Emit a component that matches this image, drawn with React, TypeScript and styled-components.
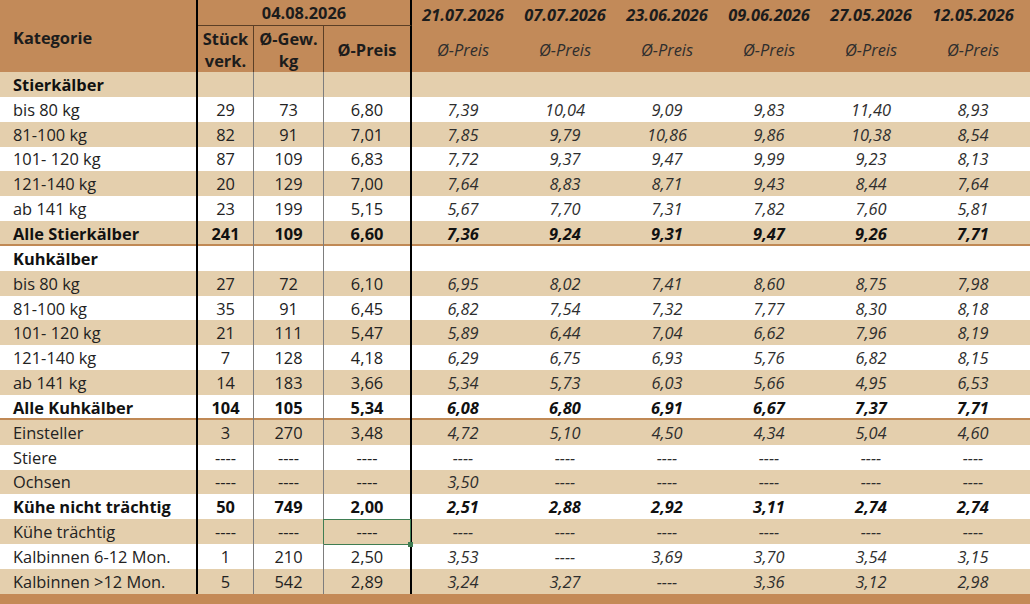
import React from 'react';
import styled, { createGlobalStyle, css } from 'styled-components';

const GlobalStyle = createGlobalStyle`
  html, body { margin: 0; padding: 0; background: #ffffff; }
  body {
    font-family: "Open Sans", "Liberation Sans", sans-serif;
    color: #1c1c1c;
  }
  * { box-sizing: border-box; }
`;

const BROWN = '#c28a59';
const TAN = '#e4cfad';
const GRID = '198px 56px 70px 88px repeat(6, 102px) 1fr';
const ROW_H = '24.857px';
const FS = '16.4px';

const Page = styled.div`
  width: 1030px;
  height: 604px;
  display: flex;
  flex-direction: column;
  overflow: hidden;
`;

const Header = styled.div`
  display: grid;
  grid-template-columns: ${GRID};
  grid-template-rows: 26px 46px;
  background: ${BROWN};
  font-size: ${FS};
`;

const HeadLabel = styled.div`
  grid-row: span 2;
  font-weight: 700;
  padding: 2px 0 0 13px;
  display: flex;
  align-items: center;
  border-right: 2px solid #000;
`;

const GroupTitle = styled.div`
  grid-column: span 3;
  font-weight: 700;
  display: flex;
  align-items: center;
  justify-content: center;
  border-bottom: 1px solid #5b3f26;
  border-right: 2px solid #000;
`;

const DateHead = styled.div`
  font-weight: 700;
  font-style: italic;
  display: flex;
  align-items: center;
  justify-content: center;
  padding-top: 2px;
  white-space: nowrap;
`;

const Filler = styled.div`
  grid-row: span 2;
`;

const SubHead = styled.div<{ $edge?: 'thin' | 'thick' }>`
  font-weight: 700;
  line-height: 22px;
  text-align: center;
  display: flex;
  align-items: center;
  justify-content: center;
  padding-top: 1px;
  white-space: nowrap;
  border-right: ${(p) => (p.$edge === 'thick' ? '2px solid #000' : '1px solid #5b3f26')};
`;

const PriceHead = styled.div`
  font-style: italic;
  color: #2e2e2e;
  display: flex;
  align-items: center;
  justify-content: center;
`;

const Body = styled.div`
  display: flex;
  flex-direction: column;
`;

const Row = styled.div<{ $tan: boolean; $sep?: boolean }>`
  display: grid;
  grid-template-columns: ${GRID};
  height: ${ROW_H};
  background: ${(p) => (p.$tan ? TAN : '#ffffff')};
  font-size: ${FS};
  ${(p) =>
    p.$sep &&
    css`
      box-shadow: inset 0 -2px 0 #c08955;
    `}
`;

const LabelCell = styled.div<{ $bold?: boolean }>`
  padding-left: 13px;
  display: flex;
  align-items: center;
  font-weight: ${(p) => (p.$bold ? 700 : 400)};
  color: ${(p) => (p.$bold ? '#111' : '#222')};
  border-right: 2px solid #000;
  white-space: nowrap;
`;

const NumCell = styled.div<{ $bold?: boolean; $edge: 'thin' | 'thick'; $selected?: boolean }>`
  position: relative;
  display: flex;
  align-items: center;
  justify-content: center;
  font-weight: ${(p) => (p.$bold ? 700 : 400)};
  color: ${(p) => (p.$bold ? '#111' : '#222')};
  border-right: ${(p) => (p.$edge === 'thick' ? '2px solid #000' : '1px solid #7d7d7d')};
  ${(p) =>
    p.$selected &&
    css`
      &::after {
        content: '';
        position: absolute;
        left: -1px;
        top: 0;
        right: -1px;
        bottom: -1px;
        border: 1px solid #3f7d52;
      }
      &::before {
        content: '';
        position: absolute;
        right: -3px;
        bottom: -3px;
        width: 5px;
        height: 5px;
        background: #3f7d52;
        z-index: 2;
      }
    `}
`;

const PriceCell = styled.div<{ $bold?: boolean }>`
  display: flex;
  align-items: center;
  justify-content: center;
  font-style: italic;
  font-weight: ${(p) => (p.$bold ? 700 : 400)};
  color: ${(p) => (p.$bold ? '#111' : '#2e2e2e')};
`;

const BottomBar = styled.div`
  flex: 1;
  background: #c48a57;
`;

type DataRow = {
  label: string;
  bold?: boolean;
  sep?: boolean;
  heading?: boolean;
  cur?: [string, string, string];
  hist?: string[];
  selected?: boolean;
};

const D = '----';

const rows: DataRow[] = [
  { label: 'Stierkälber', bold: true, heading: true },
  { label: 'bis 80 kg', cur: ['29', '73', '6,80'], hist: ['7,39', '10,04', '9,09', '9,83', '11,40', '8,93'] },
  { label: '81-100 kg', cur: ['82', '91', '7,01'], hist: ['7,85', '9,79', '10,86', '9,86', '10,38', '8,54'] },
  { label: '101- 120 kg', cur: ['87', '109', '6,83'], hist: ['7,72', '9,37', '9,47', '9,99', '9,23', '8,13'] },
  { label: '121-140 kg', cur: ['20', '129', '7,00'], hist: ['7,64', '8,83', '8,71', '9,43', '8,44', '7,64'] },
  { label: 'ab 141 kg', cur: ['23', '199', '5,15'], hist: ['5,67', '7,70', '7,31', '7,82', '7,60', '5,81'] },
  { label: 'Alle Stierkälber', bold: true, sep: true, cur: ['241', '109', '6,60'], hist: ['7,36', '9,24', '9,31', '9,47', '9,26', '7,71'] },
  { label: 'Kuhkälber', bold: true, heading: true },
  { label: 'bis 80 kg', cur: ['27', '72', '6,10'], hist: ['6,95', '8,02', '7,41', '8,60', '8,75', '7,98'] },
  { label: '81-100 kg', cur: ['35', '91', '6,45'], hist: ['6,82', '7,54', '7,32', '7,77', '8,30', '8,18'] },
  { label: '101- 120 kg', cur: ['21', '111', '5,47'], hist: ['5,89', '6,44', '7,04', '6,62', '7,96', '8,19'] },
  { label: '121-140 kg', cur: ['7', '128', '4,18'], hist: ['6,29', '6,75', '6,93', '5,76', '6,82', '8,15'] },
  { label: 'ab 141 kg', cur: ['14', '183', '3,66'], hist: ['5,34', '5,73', '6,03', '5,66', '4,95', '6,53'] },
  { label: 'Alle Kuhkälber', bold: true, sep: true, cur: ['104', '105', '5,34'], hist: ['6,08', '6,80', '6,91', '6,67', '7,37', '7,71'] },
  { label: 'Einsteller', cur: ['3', '270', '3,48'], hist: ['4,72', '5,10', '4,50', '4,34', '5,04', '4,60'] },
  { label: 'Stiere', cur: [D, D, D], hist: [D, D, D, D, D, D] },
  { label: 'Ochsen', cur: [D, D, D], hist: ['3,50', D, D, D, D, D] },
  { label: 'Kühe nicht trächtig', bold: true, cur: ['50', '749', '2,00'], hist: ['2,51', '2,88', '2,92', '3,11', '2,74', '2,74'] },
  { label: 'Kühe trächtig', selected: true, cur: [D, D, D], hist: [D, D, D, D, D, D] },
  { label: 'Kalbinnen 6-12 Mon.', cur: ['1', '210', '2,50'], hist: ['3,53', D, '3,69', '3,70', '3,54', '3,15'] },
  { label: 'Kalbinnen >12 Mon.', cur: ['5', '542', '2,89'], hist: ['3,24', '3,27', D, '3,36', '3,12', '2,98'] },
];

const dates = ['21.07.2026', '07.07.2026', '23.06.2026', '09.06.2026', '27.05.2026', '12.05.2026'];

export default function App() {
  return (
    <>
      <GlobalStyle />
      <Page>
        <Header>
          <HeadLabel>Kategorie</HeadLabel>
          <GroupTitle>04.08.2026</GroupTitle>
          {dates.map((d) => (
            <DateHead key={d}>{d}</DateHead>
          ))}
          <Filler />
          <SubHead $edge="thin">
            Stück
            <br />
            verk.
          </SubHead>
          <SubHead $edge="thin">
            Ø-Gew.
            <br />
            kg
          </SubHead>
          <SubHead $edge="thick">Ø-Preis</SubHead>
          {dates.map((d) => (
            <PriceHead key={d}>Ø-Preis</PriceHead>
          ))}
        </Header>
        <Body>
          {rows.map((r, i) => {
            const cur = r.cur ?? ['', '', ''];
            const hist = r.hist ?? ['', '', '', '', '', ''];
            const numBold = r.bold && !r.heading;
            return (
              <Row key={i} $tan={i % 2 === 0} $sep={r.sep}>
                <LabelCell $bold={r.bold}>{r.label}</LabelCell>
                <NumCell $edge="thin" $bold={numBold}>{cur[0]}</NumCell>
                <NumCell $edge="thin" $bold={numBold}>{cur[1]}</NumCell>
                <NumCell $edge="thick" $bold={numBold} $selected={r.selected}>
                  {cur[2]}
                </NumCell>
                {hist.map((h, j) => (
                  <PriceCell key={j} $bold={numBold}>
                    {h}
                  </PriceCell>
                ))}
                <div />
              </Row>
            );
          })}
        </Body>
        <BottomBar />
      </Page>
    </>
  );
}
